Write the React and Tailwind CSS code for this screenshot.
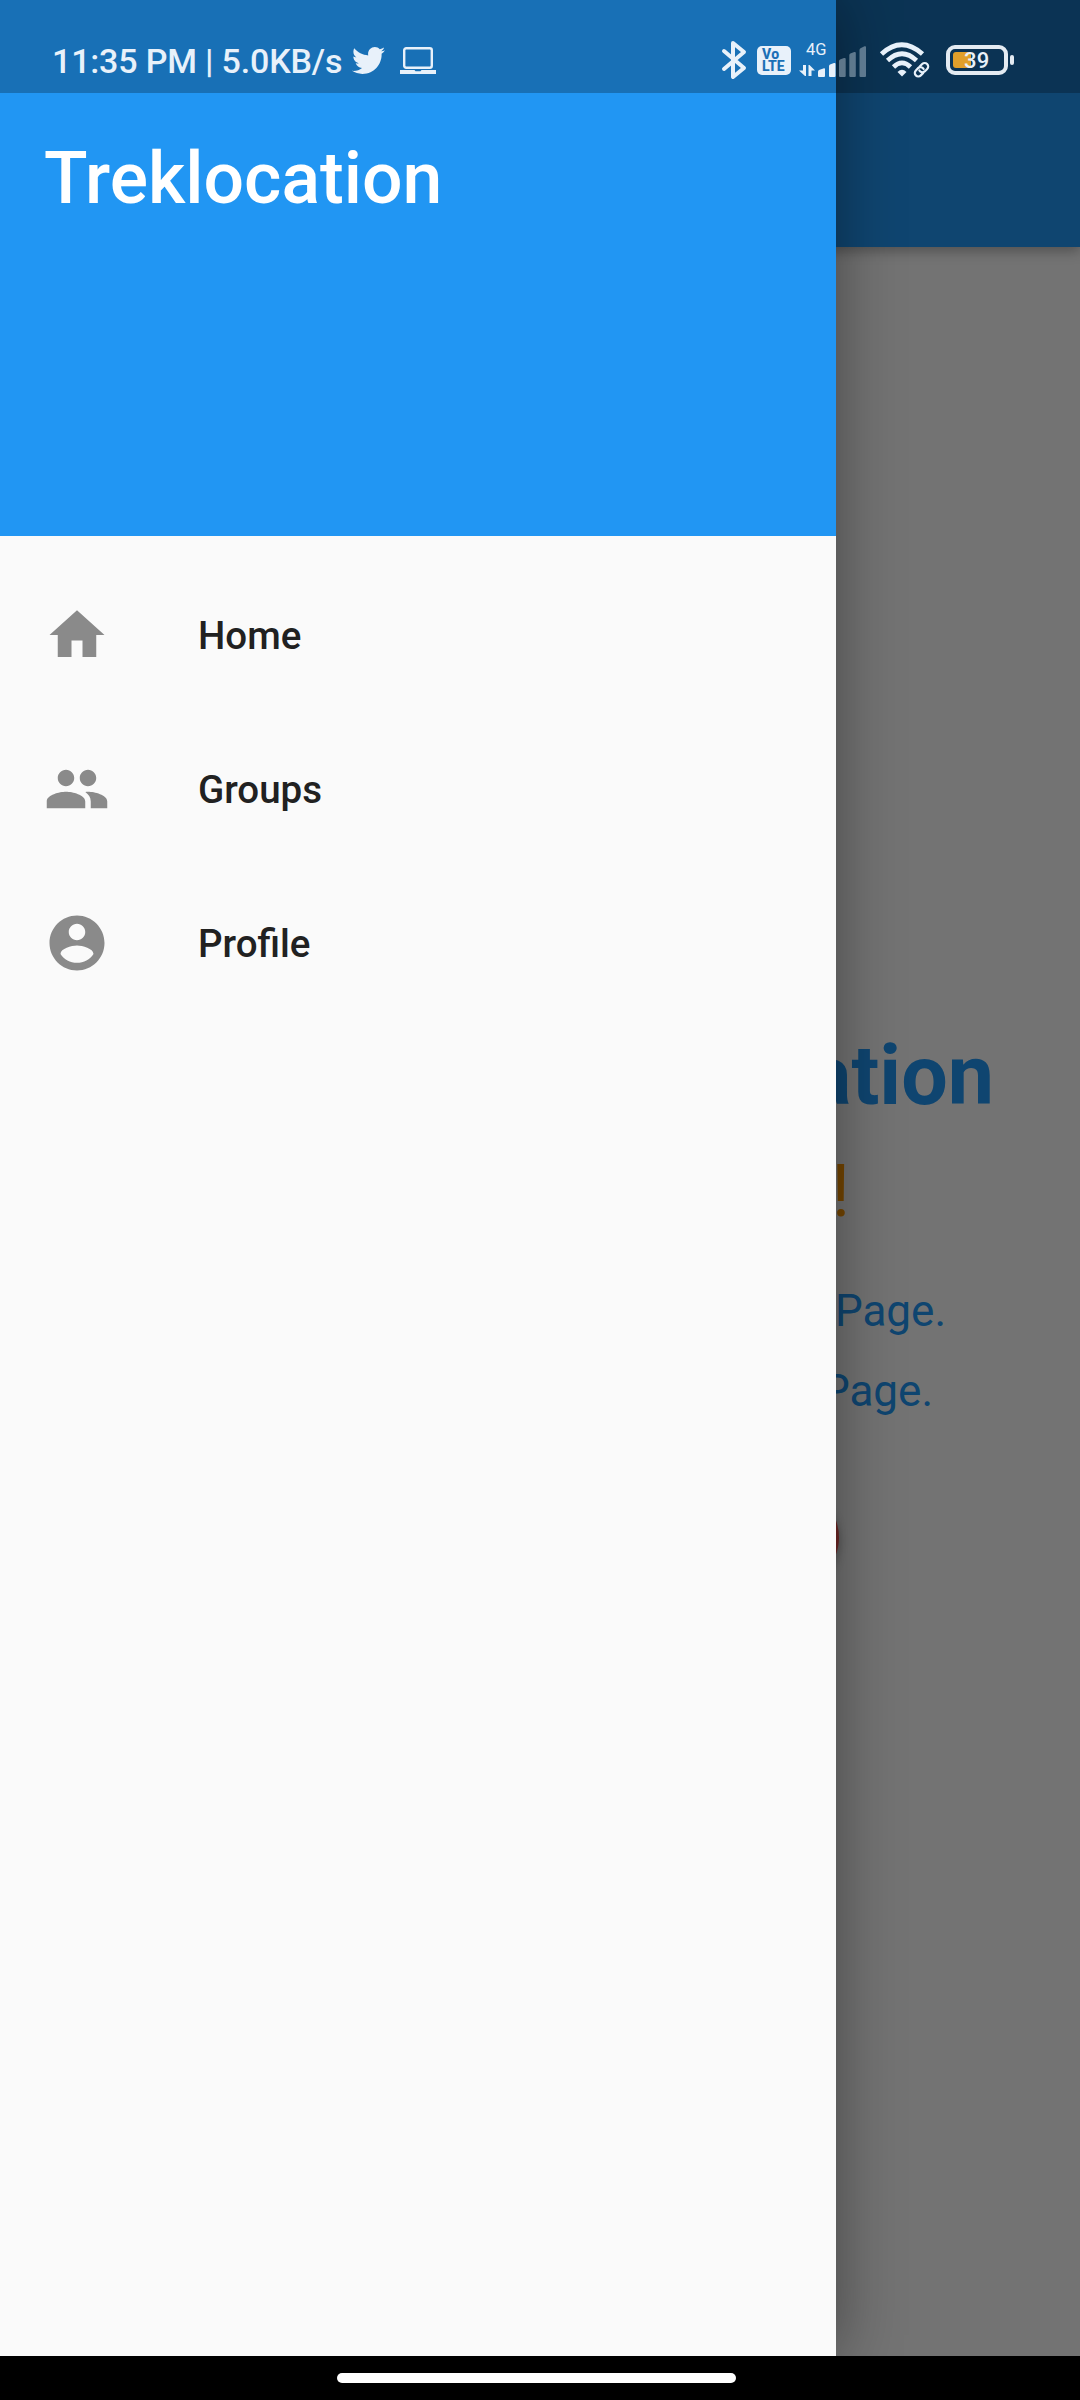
import React from "react";
import { MdHome, MdPeople } from "react-icons/md";
import { FaTwitter } from "react-icons/fa";

function AccountCircle({ className }) {
  return (
    <svg className={className} viewBox="0 0 24 24" fill="currentColor">
      <path d="M12 2C6.480 2 2 6.480 2 12s4.480 10 10 10 10-4.480 10-10S17.520 2 12 2zm0 3c1.660 0 3 1.340 3 3s-1.340 3-3 3-3-1.340-3-3 1.340-3 3-3zm0 14.200c-2.500 0-4.710-1.280-6-3.220.030-1.990 4-3.080 6-3.080 1.990 0 5.970 1.090 6 3.080-1.290 1.940-3.500 3.220-6 3.220z" />
    </svg>
  );
}

const menu = [
  { label: "Home", Icon: MdHome },
  { label: "Groups", Icon: MdPeople },
  { label: "Profile", Icon: AccountCircle },
];

function Laptop() {
  return (
    <svg className="ml-[15px] mt-[1px] h-[27px] w-[36px]" viewBox="0 0 36 27" fill="none">
      <rect x="4.2" y="1.2" width="27.6" height="19.6" rx="2" stroke="currentColor" strokeWidth="2.4" />
      <path d="M0 23H14.5L15.5 24.3H20.5L21.5 23H36V27H0Z" fill="currentColor" />
    </svg>
  );
}

function Bluetooth() {
  return (
    <svg className="h-[40px] w-[26px]" viewBox="0 0 26 40" fill="none" stroke="currentColor" strokeWidth="4" strokeLinecap="round" strokeLinejoin="round">
      <path d="M3 11L23 28L12 37V3L23 12L3 29" />
    </svg>
  );
}

function Volte() {
  return (
    <div className="ml-[10px] flex h-[29px] w-[34px] flex-col justify-center rounded-[5px] bg-[#e8f1fa] pl-[5px] text-[14px] leading-[12.5px] font-extrabold text-[#1b70b6]">
      <span className="tracking-[0.3px]">Vo</span>
      <span>LTE</span>
    </div>
  );
}

function Signal() {
  return (
    <div className="ml-[8px] flex h-[36px] w-[67px] flex-col">
      <span className="-mt-[1px] ml-[7px] h-[16px] text-[16.5px] leading-[18px]">4G</span>
      <svg className="-mt-[12px] h-[32px] w-[67px] shrink-0" viewBox="0 0 67 32" fill="currentColor">
        <path d="M4 20H7V31H6L0 25.500H4ZM9.500 20H10.500L16 25.500H12.500V31H9.500Z" />
        <path d="M19 31V26.500Q19 25.500 20 25L25 23.300Q26 23 26 24.300V31Q26 32 25 32H20Q19 32 19 31Z" />
        <path d="M30 31V21Q30 20 31 19.500L35 18Q36.500 17.500 36.500 19V31Q36.500 32 35.500 32H31Q30 32 30 31Z" />
        <g opacity=".38">
          <path d="M40 31V16Q40 15 41 14.500L45 13Q46.700 12.500 46.700 14V31Q46.700 32 45.700 32H41Q40 32 40 31Z" />
          <path d="M50.300 31V10Q50.300 9 51.300 8.500L55.300 7Q56.800 6.500 56.800 8V31Q56.800 32 55.800 32H51.300Q50.300 32 50.300 31Z" />
          <path d="M60.500 31V5Q60.500 4 61.500 3.300L65.500 1.300Q67 .8 67 2V31Q67 32 66 32H61.500Q60.500 32 60.500 31Z" />
        </g>
      </svg>
    </div>
  );
}

function Wifi() {
  return (
    <svg className="ml-[13px] h-[36px] w-[51px]" viewBox="0 0 51 36" fill="none" stroke="currentColor">
      <path d="M2.500 12Q22.500 -6.500 43.500 12" strokeWidth="4.800" />
      <path d="M8.500 18.500Q23 5 37.500 18.500" strokeWidth="4.600" />
      <path d="M14.500 25Q23 16.500 31.500 25" strokeWidth="4.600" />
      <path d="M18.500 30Q23 25.500 27.500 30L23 34.500Z" fill="currentColor" stroke="none" />
      <g transform="translate(42.500 27.700) rotate(-45)" strokeWidth="2.200" strokeLinecap="round">
        <path d="M-1 3.500H-4.500A3.500 3.500 0 0 1 -4.500 -3.500H-1A3.500 3.500 0 0 1 2 1" />
        <path d="M1 -3.500H4.500A3.500 3.500 0 0 1 4.500 3.500H1A3.500 3.500 0 0 1 -2 -1" />
      </g>
    </svg>
  );
}

function Battery() {
  return (
    <div className="ml-[16px] flex items-center gap-[2px]">
      <div className="relative flex h-[30px] w-[62px] items-center rounded-[9px] border-[4px] border-[#e4ebf2] pl-[3px]">
        <div className="h-[16px] w-[18px] rounded-[3px] bg-[#e09f2b]" />
        <span className="absolute left-[14px] top-0 text-[22px] leading-[24px] font-medium tracking-[0.3px]">39</span>
      </div>
      <div className="h-[10px] w-[4px] rounded-[2px] bg-[#e4ebf2]" />
    </div>
  );
}

function StatusBar() {
  return (
    <div className="absolute inset-x-0 top-0 flex h-[93px] items-start bg-black/25 text-[#e8f1fa]">
      <div className="mt-[46px] ml-[52px] flex items-start">
        <span className="-mt-[5px] w-[290px] text-[34px] leading-[40px] font-medium tracking-[-0.17px] whitespace-nowrap">11:35 PM | 5.0KB/s</span>
        <FaTwitter className="ml-[10px] -mt-[2px] size-[33px]" />
        <Laptop />
      </div>
      <div className="mt-[40px] ml-auto mr-[66px] flex h-[40px] items-center">
        <Bluetooth />
        <Volte />
        <Signal />
        <Wifi />
        <Battery />
      </div>
    </div>
  );
}

export default function App() {
  return (
    <div className="relative flex h-[2400px] w-[1080px] flex-col overflow-hidden bg-black font-['Roboto',sans-serif]">
      <div className="relative flex h-[2356px] flex-col overflow-hidden bg-[#fafafa]">
        <div className="h-[247px] shrink-0 bg-[#2196f3] shadow-[0_4px_12px_rgba(0,0,0,0.3)]" />
        <main className="flex flex-col items-end text-[#2196f3]">
          <h1 className="mt-[779px] mr-[86px] text-[82.5px] leading-[100px] font-bold">Treklocation</h1>
          <p className="mt-[24px] mr-[230px] text-[71.5px] leading-[84px] text-[#ff9800]">!</p>
          <p className="mt-[51px] mr-[134px] text-[44px] leading-[52px]">Page.</p>
          <p className="mt-[28px] mr-[147px] text-[44px] leading-[52px]">Page.</p>
          <div className="mt-[71px] mr-[241px] h-[99px] w-[598px] rounded-[50px] bg-[#ef5350] shadow-[0_4px_10px_rgba(0,0,0,0.3)]" />
        </main>
        <div className="absolute inset-0 bg-black/54" />
        <aside className="absolute inset-y-0 left-0 flex w-[836px] flex-col bg-[#fafafa] shadow-[0_0_60px_rgba(0,0,0,0.4)]">
          <header className="h-[536px] bg-[#2196f3] px-[44px] pt-[137px] text-[71.5px] leading-[84px] font-medium text-white">Treklocation</header>
          <nav className="pt-[22px]">
            {menu.map(({ label, Icon }) => (
              <div key={label} className="flex h-[154px] items-center gap-[88px] pl-[44px]">
                <Icon className="size-[66px] text-[#8a8a8a]" />
                <span className="pt-[2px] text-[38.5px] leading-[46px] font-medium text-[#212121]">{label}</span>
              </div>
            ))}
          </nav>
        </aside>
      </div>
      <div className="flex h-[44px] justify-center pr-[7px] pt-[17px]">
        <div className="h-[10px] w-[399px] rounded-[5px] bg-white" />
      </div>
      <StatusBar />
    </div>
  );
}
